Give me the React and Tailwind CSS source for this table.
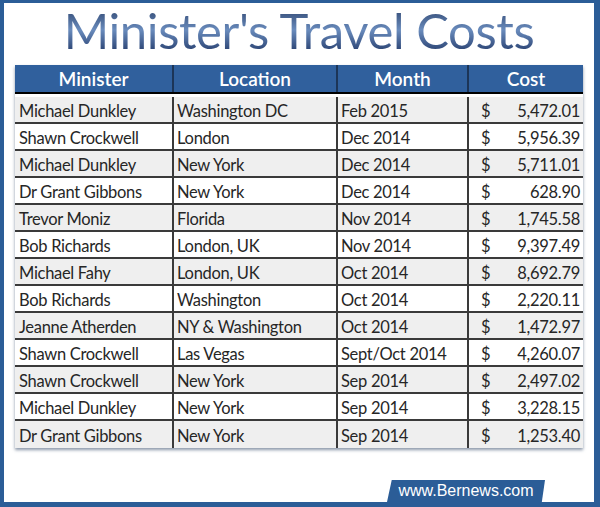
import React from 'react';

const rows = [
  ['Michael Dunkley', 'Washington DC', 'Feb 2015', '5,472.01'],
  ['Shawn Crockwell', 'London', 'Dec 2014', '5,956.39'],
  ['Michael Dunkley', 'New York', 'Dec 2014', '5,711.01'],
  ['Dr Grant Gibbons', 'New York', 'Dec 2014', '628.90'],
  ['Trevor Moniz', 'Florida', 'Nov 2014', '1,745.58'],
  ['Bob Richards', 'London, UK', 'Nov 2014', '9,397.49'],
  ['Michael Fahy', 'London, UK', 'Oct 2014', '8,692.79'],
  ['Bob Richards', 'Washington', 'Oct 2014', '2,220.11'],
  ['Jeanne Atherden', 'NY & Washington', 'Oct 2014', '1,472.97'],
  ['Shawn Crockwell', 'Las Vegas', 'Sept/Oct 2014', '4,260.07'],
  ['Shawn Crockwell', 'New York', 'Sep 2014', '2,497.02'],
  ['Michael Dunkley', 'New York', 'Sep 2014', '3,228.15'],
  ['Dr Grant Gibbons', 'New York', 'Sep 2014', '1,253.40'],
];

const headers = ['Minister', 'Location', 'Month', 'Cost'];
const widths = ['w-[159px]', 'w-[164px]', 'w-[131px]', 'w-[114px]'];

export default function App() {
  return (
    <div className="w-[600px] h-[507px] bg-white border-t-[3px] border-l-[4px] border-r-[6px] border-b-[5px] border-[#2b5d97] flex flex-col font-['Lato',sans-serif]">
      {/* title */}
      <div className="h-[62px] flex justify-center items-start">
        <h1 className="text-[49px] leading-[54px] tracking-[-0.4px] bg-gradient-to-b from-[#263b63] via-[#6a8cbd] to-[#1c3160] bg-clip-text text-transparent">
          Minister's Travel Costs
        </h1>
      </div>

      {/* table */}
      <div className="ml-[11px] w-[568px] shadow-[0_2px_3px_rgba(60,80,110,0.6)]">
        <div className="flex h-[27px] bg-[#30609d]">
          {headers.map((h, i) => (
            <div
              key={h}
              className={`${widths[i]} flex items-center justify-center pt-[1px] text-white text-[19px] font-semibold ${i < 3 ? 'border-r-2 border-[#1c3557]' : ''}`}
            >
              {h}
            </div>
          ))}
        </div>
        <div className="h-[2px] bg-black" />
        <div className="h-[3px] bg-white" />
        {rows.map((r, idx) => (
          <div
            key={idx}
            className={`flex h-[27px] text-[16.5px] tracking-[-0.3px] text-[#262626] ${idx < rows.length - 1 ? 'border-b-2 border-[#3a3a3a]' : ''} ${idx % 2 === 0 ? 'bg-[#efefef]' : 'bg-white'}`}
          >
            <div className={`${widths[0]} pl-[4px] pt-[3px] flex items-center border-r-2 border-[#3a3a3a]`}>{r[0]}</div>
            <div className={`${widths[1]} pl-[3px] pt-[3px] flex items-center border-r-2 border-[#3a3a3a]`}>{r[1]}</div>
            <div className={`${widths[2]} pl-[3px] pt-[3px] flex items-center border-r-2 border-[#3a3a3a]`}>{r[2]}</div>
            <div className={`${widths[3]} pl-[12px] pr-[3px] pt-[3px] flex items-center justify-between`}>
              <span>$</span>
              <span>{r[3]}</span>
            </div>
          </div>
        ))}
      </div>

      {/* footer tab */}
      <div className="mt-auto flex justify-end pr-[49px]">
        <div className="w-[158px] h-[22px] bg-[#2b5d97] [clip-path:polygon(3%_0,100%_0,98%_100%,0_100%)] flex items-center justify-center text-white text-[16px] font-['Liberation_Sans',sans-serif]">
          www.Bernews.com
        </div>
      </div>
    </div>
  );
}
